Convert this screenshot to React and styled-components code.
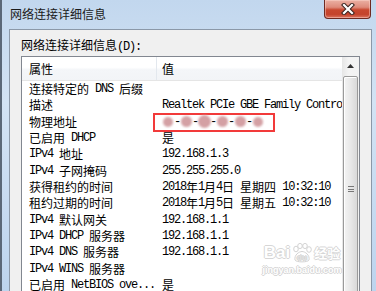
import React from "react";
import styled, { createGlobalStyle } from "styled-components";

const GlobalStyle = createGlobalStyle`
  html, body {
    margin: 0;
    padding: 0;
    background: #c9dcf0;
  }
  * {
    box-sizing: border-box;
  }
`;

const Window = styled.div`
  width: 376px;
  height: 291px;
  overflow: hidden;
  display: flex;
  flex-direction: column;
  border-left: 2px solid #5b6878;
  background: linear-gradient(
    180deg,
    #c2d7ee 0%,
    #d3e3f4 35%,
    #c7dbf1 70%,
    #bdd4ee 100%
  );
`;

const TitleBar = styled.div`
  height: 29px;
  flex: none;
  display: flex;
  align-items: flex-start;
  justify-content: space-between;
`;

const Title = styled.div`
  padding: 6px 0 0 8px;
  font-family: "Noto Sans CJK SC", sans-serif;
  font-size: 12px;
  line-height: 16px;
  color: #1b1b1b;
`;

const CloseButton = styled.div`
  width: 47px;
  height: 19px;
  margin-right: 5px;
  border: 1px solid #6e2a22;
  border-top: none;
  border-radius: 0 0 4px 4px;
  background: linear-gradient(
    180deg,
    #ebb1a4 0%,
    #de8b7b 40%,
    #c8472f 55%,
    #c4432c 80%,
    #dc7460 100%
  );
  box-shadow: inset 0 0 0 1px rgba(255, 220, 210, 0.45);
  display: flex;
  align-items: center;
  justify-content: center;
`;

const Frame = styled.div`
  flex: 1;
  display: flex;
  padding: 0 4px 0 7px;
  min-height: 0;
`;

const Client = styled.div`
  flex: 1;
  display: flex;
  flex-direction: column;
  background: #f0f0f0;
  border: 1px solid #8b98a8;
  border-bottom: none;
  padding: 7px 11px 0 11px;
  min-height: 0;
`;

const Label = styled.div`
  height: 19px;
  font-family: "Noto Sans CJK SC", sans-serif;
  font-size: 12px;
  line-height: 16px;
  color: #000;
`;

const ListBox = styled.div`
  position: relative;
  flex: 1;
  display: flex;
  background: #fff;
  border: 1px solid #828790;
  border-bottom: none;
  min-height: 0;
`;

const Table = styled.div`
  flex: 1;
  display: flex;
  flex-direction: column;
  min-width: 0;
`;

const Header = styled.div`
  height: 24px;
  flex: none;
  display: grid;
  grid-template-columns: 135px 1fr;
  border-bottom: 1px solid #e5e5e5;
  background: linear-gradient(180deg, #ffffff 0%, #ffffff 45%, #f4f6f9 55%, #f2f4f7 100%);
`;

const HeaderCell = styled.div`
  display: flex;
  align-items: center;
  padding-left: ${(p) => p.$pad}px;
  border-right: ${(p) => (p.$divider ? "1px solid #e3e8ee" : "none")};
  font-family: "Noto Sans CJK SC", sans-serif;
  font-size: 12px;
  color: #000;
`;

const Row = styled.div`
  height: 16.33px;
  flex: none;
  display: grid;
  grid-template-columns: 135px 1fr;
  font-family: "Noto Sans CJK SC", sans-serif;
  font-size: 12px;
  color: #000;
  white-space: nowrap;
`;

const Cell = styled.div`
  position: relative;
  display: flex;
  align-items: center;
  padding-left: ${(p) => p.$pad}px;
  overflow: ${(p) => (p.$clip ? "hidden" : "visible")};
  line-height: 16px;
`;

const Latin = styled.span`
  font-family: "Liberation Mono", "DejaVu Sans Mono", monospace;
  font-size: 12px;
  letter-spacing: -1.2px;
  white-space: pre;
`;

const Highlight = styled.div`
  position: absolute;
  left: -4px;
  top: -1px;
  width: 122px;
  height: 19px;
  border: 2.5px solid #f23a3a;
`;

const Mac = styled.div`
  display: flex;
  align-items: center;
`;

const Byte = styled.span`
  width: 12px;
  height: 12px;
  display: flex;
  align-items: center;
  justify-content: center;
  &::before {
    content: "";
    flex: none;
    width: ${(p) => p.$size}px;
    height: ${(p) => p.$size}px;
    border-radius: 50%;
    background: #d4a0a4;
    filter: blur(0.8px);
  }
`;

const ScrollBar = styled.div`
  width: 17px;
  flex: none;
  display: flex;
  flex-direction: column;
  background: linear-gradient(90deg, #e6e6e6 0%, #f4f4f4 40%, #f2f2f2 100%);
`;

const ArrowButton = styled.div`
  height: 18px;
  flex: none;
  display: flex;
  align-items: center;
  justify-content: center;
`;

const Thumb = styled.div`
  margin: 1px 1px 0 1px;
  height: 226px;
  flex: none;
  border: 1px solid #9a9a9a;
  border-radius: 2px;
  background: linear-gradient(90deg, #f4f4f4 0%, #e8e8e8 50%, #d9d9d9 100%);
  box-shadow: inset 1px 1px 0 #fff;
  display: flex;
  align-items: center;
  justify-content: center;
`;

const Grip = styled.div`
  width: 6px;
  height: 6px;
  border-top: 1px solid #777;
  border-bottom: 1px solid #777;
  position: relative;
  &::after {
    content: "";
    position: absolute;
    left: 0;
    right: 0;
    top: 1.5px;
    border-top: 1px solid #777;
  }
`;

const Watermark = styled.div`
  position: absolute;
  left: 236px;
  top: 186px;
  width: 88px;
  display: flex;
  flex-direction: column;
  align-items: center;
  pointer-events: none;
  color: #ffffff;
  text-shadow: 1px 0 0 #d6d6d6, -1px 0 0 #d6d6d6, 0 1px 0 #d6d6d6, 0 -1px 0 #d6d6d6;
`;

const MarkTop = styled.div`
  display: flex;
  align-items: center;
  gap: 1px;
`;

const MarkBai = styled.span`
  font-family: "Liberation Sans", Arial, sans-serif;
  font-weight: bold;
  font-size: 17px;
  line-height: 18px;
`;

const MarkCn = styled.span`
  font-family: "Noto Sans CJK SC", sans-serif;
  font-weight: bold;
  font-size: 13px;
  line-height: 16px;
`;

const MarkUrl = styled.span`
  font-family: "Liberation Sans", Arial, sans-serif;
  font-weight: bold;
  font-size: 9px;
  line-height: 12px;
  margin-top: 1px;
`;

const mix = (text) =>
  text
    .split(/([\u0000-\u00ff]+)/)
    .filter(Boolean)
    .map((part, i) =>
      /^[\u0000-\u00ff]+$/.test(part) ? <Latin key={i}>{part}</Latin> : <span key={i}>{part}</span>
    );

const rows = [
  ["连接特定的 DNS 后缀", ""],
  ["描述", "Realtek PCIe GBE Family Controller"],
  ["物理地址", "MAC"],
  ["已启用 DHCP", "是"],
  ["IPv4 地址", "192.168.1.3"],
  ["IPv4 子网掩码", "255.255.255.0"],
  ["获得租约的时间", "2018年1月4日 星期四 10:32:10"],
  ["租约过期的时间", "2018年1月5日 星期五 10:32:10"],
  ["IPv4 默认网关", "192.168.1.1"],
  ["IPv4 DHCP 服务器", "192.168.1.1"],
  ["IPv4 DNS 服务器", "192.168.1.1"],
  ["IPv4 WINS 服务器", ""],
  ["已启用 NetBIOS ove...", "是"],
];

const macBytes = [10, 11, 13, 11, 11, 10];

const MacValue = () => (
  <>
    <Highlight />
    <Mac>
      {macBytes.map((s, i) => (
        <React.Fragment key={i}>
          {i > 0 && <Latin>-</Latin>}
          <Byte $size={s} />
        </React.Fragment>
      ))}
    </Mac>
  </>
);

const CloseIcon = () => (
  <svg width="14" height="12" viewBox="0 0 14 12">
    <path d="M3 2 L11 10 M11 2 L3 10" stroke="#3a2420" strokeWidth="4.2" strokeLinecap="square" fill="none" />
    <path d="M3 2 L11 10 M11 2 L3 10" stroke="#ffffff" strokeWidth="2.2" strokeLinecap="square" fill="none" />
  </svg>
);

const Paw = () => (
  <svg width="22" height="20" viewBox="0 0 22 20">
    <g fill="#fff" stroke="#d3d3d3" strokeWidth="1">
      <ellipse cx="5" cy="6" rx="2.3" ry="2.8" />
      <ellipse cx="9" cy="3" rx="2.3" ry="2.6" />
      <ellipse cx="14" cy="3" rx="2.3" ry="2.6" />
      <ellipse cx="18" cy="6.5" rx="2.3" ry="2.8" />
      <path d="M4 17 C3 12 8 8.5 11 8.5 C14 8.5 19 12 18 17 C17 19.5 5 19.5 4 17 Z" />
    </g>
    <text x="11" y="17" textAnchor="middle" fontFamily="Liberation Sans, sans-serif" fontWeight="bold" fontSize="8" fill="#e2e2e2">
      du
    </text>
  </svg>
);

const UpArrow = () => (
  <svg width="7" height="4" viewBox="0 0 7 4">
    <path d="M0 4 L3.5 0 L7 4 Z" fill="#333" />
  </svg>
);

export default function App() {
  return (
    <>
      <GlobalStyle />
      <Window>
        <TitleBar>
          <Title>网络连接详细信息</Title>
          <CloseButton>
            <CloseIcon />
          </CloseButton>
        </TitleBar>
        <Frame>
          <Client>
            <Label>网络连接详细信息{mix("(D):")}</Label>
            <ListBox>
              <Table>
                <Header>
                  <HeaderCell $pad={7} $divider>
                    属性
                  </HeaderCell>
                  <HeaderCell $pad={5}>值</HeaderCell>
                </Header>
                {rows.map(([name, value], i) => (
                  <Row key={i}>
                    <Cell $pad={7}>{mix(name)}</Cell>
                    <Cell $pad={5} $clip={value !== "MAC"}>
                      {value === "MAC" ? <MacValue /> : mix(value)}
                    </Cell>
                  </Row>
                ))}
              </Table>
              <ScrollBar>
                <ArrowButton>
                  <UpArrow />
                </ArrowButton>
                <Thumb>
                  <Grip />
                </Thumb>
              </ScrollBar>
              <Watermark>
                <MarkTop>
                  <MarkBai>Bai</MarkBai>
                  <Paw />
                  <MarkCn>经验</MarkCn>
                </MarkTop>
                <MarkUrl>jingyan.baidu.com</MarkUrl>
              </Watermark>
            </ListBox>
          </Client>
        </Frame>
      </Window>
    </>
  );
}
